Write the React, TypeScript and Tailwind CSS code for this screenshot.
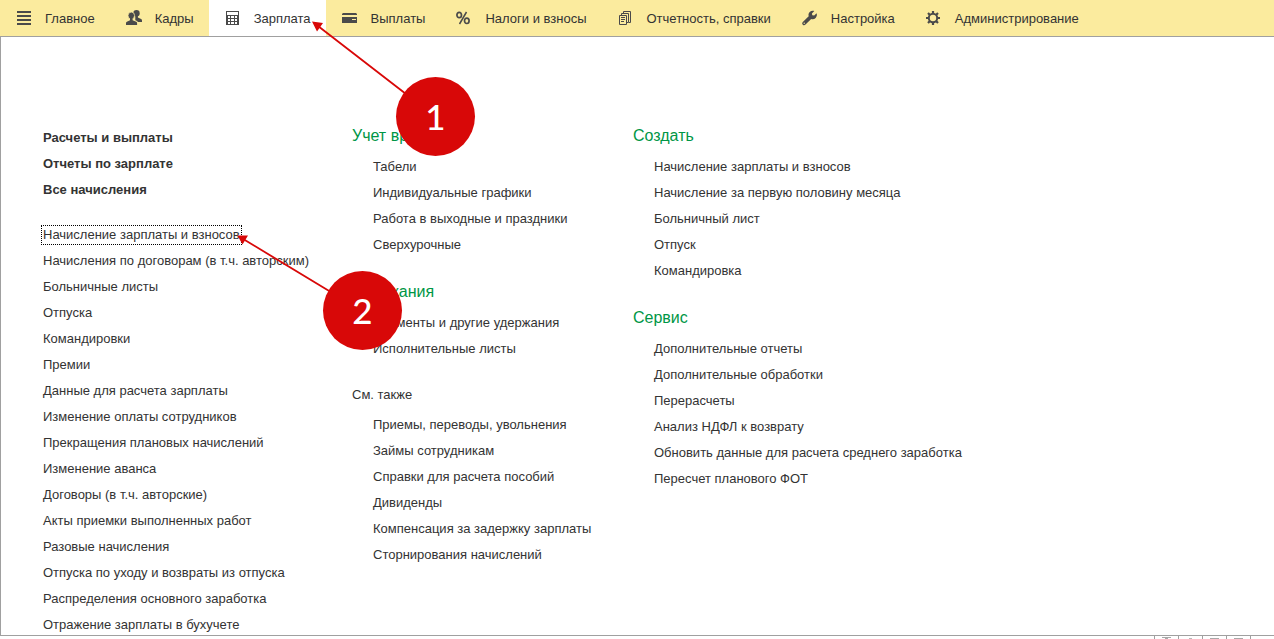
import React from 'react';

type NavItem = { label: string; icon: React.ReactNode; active?: boolean };

function Icon({ children }: { children: React.ReactNode }) {
  return (
    <svg width="16" height="16" viewBox="0 0 16 16" fill="#4a4a4a" className="shrink-0 overflow-visible" aria-hidden="true">
      {children}
    </svg>
  );
}

const navItems: NavItem[] = [
  {
    label: 'Главное',
    icon: (
      <Icon>
        <path d="M1 1h14v2H1zM1 5h14v2H1zM1 9h14v2H1zM1 13h14v2H1z" />
      </Icon>
    ),
  },
  {
    label: 'Кадры',
    icon: (
      <Icon>
        <circle cx="10.500" cy="3.200" r="3.200" />
        <path d="M9.300 5h2.600v2.600l3.200 1.500c.5.300.9.800.9 1.500V12h-4.200c-.4-.9-1.300-1.300-2.500-1.700Z" />
        <ellipse cx="5.300" cy="5.600" rx="3.300" ry="3.500" stroke="#fbeb9e" strokeWidth=".8" />
        <path d="M4 8h2.600v2.200l3.600 1.500c.6.300.9.800.9 1.500V15H0v-1.800c0-.7.300-1.200.9-1.500L4 10.200Z" />
      </Icon>
    ),
  },
  {
    label: 'Зарплата',
    active: true,
    icon: (
      <Icon>
        <path fillRule="evenodd" d="M1 1h13v14H1zM2 2v3h11V2zM3 6v2h2V6zM6 6v2h3V6zM10 6v2h2V6zM3 9v2h2V9zM6 9v2h3V9zM10 9v2h2V9zM3 12v2h2v-2zM6 12v2h3v-2zM10 12v2h2v-2z" />
      </Icon>
    ),
  },
  {
    label: 'Выплаты',
    icon: (
      <Icon>
        <path d="M1 3h13l1 1v1H0V4z" />
        <path fillRule="evenodd" d="M0 7h15v6H0zM10 9v1h4V9z" />
      </Icon>
    ),
  },
  {
    label: 'Налоги и взносы',
    icon: (
      <Icon>
        <g fill="none" stroke="#4a4a4a">
          <ellipse cx="3.200" cy="5" rx="2.300" ry="2.700" strokeWidth="1.700" />
          <ellipse cx="10.800" cy="10.800" rx="2.300" ry="2.700" strokeWidth="1.700" />
          <path d="M10.500 2 3.500 14" strokeWidth="1.500" />
        </g>
      </Icon>
    ),
  },
  {
    label: 'Отчетность, справки',
    icon: (
      <Icon>
        <g fill="none" stroke="#4a4a4a">
          <path d="M1.500 5.500h7v9h-7zM3.500 5V3.500h7v9H9M5.500 3V1.500h7v11H11" />
          <path d="M3 7.500h4M3 9.500h4M3 11.500h3" />
        </g>
      </Icon>
    ),
  },
  {
    label: 'Настройка',
    icon: (
      <Icon>
        <path d="M14.600 3.300 12.200 5.600 10.300 5.200 9.900 3.500 12.300 1.100C10.700.5 8.900.9 7.700 2.100 6.500 3.300 6.200 4.900 6.700 6.300L.8 12C0 12.800 0 14 .8 14.700c.7.7 1.900.7 2.700-.1l5.700-5.700c1.500.5 3.200.2 4.400-1 1.300-1.200 1.600-3.100 1-4.600Z" />
        <circle cx="2.200" cy="13.200" r=".7" fill="#fbeb9e" />
      </Icon>
    ),
  },
  {
    label: 'Администрирование',
    icon: (
      <Icon>
        <circle cx="7" cy="8" r="4.200" fill="none" stroke="#4a4a4a" strokeWidth="2" />
        <path d="M7 1v3M7 12v3M0 8h3M11 8h3M2 3l2.200 2.200M9.800 10.800 12 13M12 3 9.800 5.200M4.200 10.800 2 13" stroke="#4a4a4a" strokeWidth="2.200" />
      </Icon>
    ),
  },
];

const mainLinks = ['Расчеты и выплаты', 'Отчеты по зарплате', 'Все начисления'];

const payrollLinks = [
  'Начисление зарплаты и взносов',
  'Начисления по договорам (в т.ч. авторским)',
  'Больничные листы',
  'Отпуска',
  'Командировки',
  'Премии',
  'Данные для расчета зарплаты',
  'Изменение оплаты сотрудников',
  'Прекращения плановых начислений',
  'Изменение аванса',
  'Договоры (в т.ч. авторские)',
  'Акты приемки выполненных работ',
  'Разовые начисления',
  'Отпуска по уходу и возвраты из отпуска',
  'Распределения основного заработка',
  'Отражение зарплаты в бухучете',
];

type Group = { title: string; small?: boolean; links: string[] };

const middleGroups: Group[] = [
  { title: 'Учет времени', links: ['Табели', 'Индивидуальные графики', 'Работа в выходные и праздники', 'Сверхурочные'] },
  { title: 'Удержания', links: ['Алименты и другие удержания', 'Исполнительные листы'] },
  {
    title: 'См. также',
    small: true,
    links: [
      'Приемы, переводы, увольнения',
      'Займы сотрудникам',
      'Справки для расчета пособий',
      'Дивиденды',
      'Компенсация за задержку зарплаты',
      'Сторнирования начислений',
    ],
  },
];

const rightGroups: Group[] = [
  {
    title: 'Создать',
    links: ['Начисление зарплаты и взносов', 'Начисление за первую половину месяца', 'Больничный лист', 'Отпуск', 'Командировка'],
  },
  {
    title: 'Сервис',
    links: [
      'Дополнительные отчеты',
      'Дополнительные обработки',
      'Перерасчеты',
      'Анализ НДФЛ к возврату',
      'Обновить данные для расчета среднего заработка',
      'Пересчет планового ФОТ',
    ],
  },
];

function LinkList({ links, focused }: { links: string[]; focused?: string }) {
  return (
    <ul className="flex flex-col items-start gap-1.5">
      {links.map((label) => (
        <li key={label} className="flex">
          <a
            href="#"
            className={
              label === focused
                ? 'h-5 whitespace-nowrap leading-5 outline-1 -outline-offset-1 outline-dotted outline-black -mx-0.5 px-0.5'
                : 'h-5 whitespace-nowrap leading-5'
            }
          >
            {label}
          </a>
        </li>
      ))}
    </ul>
  );
}

function Groups({ groups }: { groups: Group[] }) {
  return (
    <div className="flex flex-col gap-[27px]">
      {groups.map((g) => (
        <section key={g.title} className="flex flex-col gap-[11px]">
          <h2 className={g.small ? 'leading-[18px]' : 'text-base leading-5 text-[#009646]'}>{g.title}</h2>
          <div className="pl-[21px]">
            <LinkList links={g.links} />
          </div>
        </section>
      ))}
    </div>
  );
}

function Marker({ n, className }: { n: number; className: string }) {
  return (
    <div
      className={`absolute flex size-[79px] items-center justify-center rounded-full bg-[#d80808] font-['Lato',sans-serif] text-[35px] leading-none font-medium text-white ${className}`}
    >
      {n}
    </div>
  );
}

export default function App() {
  return (
    <div className="relative overflow-hidden bg-white font-['Liberation_Sans',Arial,sans-serif] text-[13px] text-[#333]">
      <nav className="flex h-[37px] border-b border-[#a0a0a0] bg-[#fbeb9e]">
        {navItems.map((item) => (
          <a
            key={item.label}
            href="#"
            className={
              item.active
                ? 'flex items-center gap-[13px] whitespace-nowrap bg-white pr-[15px] pl-4'
                : 'flex items-center gap-[13px] whitespace-nowrap pr-[15px] pl-4'
            }
          >
            {item.icon}
            <span className="pt-0.5">{item.label}</span>
          </a>
        ))}
      </nav>

      <main className="flex items-start border-b border-l border-[#a0a0a0] pt-[89px] pl-[42px]">
        <div className="w-[309px] shrink-0 pt-0.5">
          <div className="font-bold">
            <LinkList links={mainLinks} />
          </div>
          <div className="mt-[25px]">
            <LinkList links={payrollLinks} focused="Начисление зарплаты и взносов" />
          </div>
        </div>
        <div className="w-[281px] shrink-0">
          <Groups groups={middleGroups} />
        </div>
        <div className="flex-1">
          <Groups groups={rightGroups} />
        </div>
      </main>

      <div className="flex h-[3px] justify-end overflow-hidden pr-[23px]">
        <div className="flex w-6 justify-center border-l border-[#a0a0a0]">
          <svg width="9" height="3" aria-hidden="true"><path d="M0 1h9v1H0zM3 2h3v1H3z" fill="#a8a8a8" /></svg>
        </div>
        <div className="flex w-6 justify-center border-l border-[#a0a0a0]">
          <svg width="9" height="3" aria-hidden="true"><path d="M3 2h3v1H3z" fill="#b8b8b8" /></svg>
        </div>
        <div className="flex w-6 justify-center border-l border-[#a0a0a0]">
          <svg width="9" height="3" aria-hidden="true"><path d="M0 2h9v1H0z" fill="#a8a8a8" /></svg>
        </div>
        <div className="flex w-[25px] justify-center border-x border-[#a0a0a0]">
          <svg width="9" height="3" aria-hidden="true"><path d="M0 2h9v1H0z" fill="#a8a8a8" /></svg>
        </div>
      </div>

      <svg className="pointer-events-none absolute top-0 left-0" width="480" height="360" aria-hidden="true">
        <g stroke="#d80808" strokeWidth="1.800">
          <path d="M318 26 406 94M244 239.500 330 291.500" />
        </g>
        <path d="M312 21.500 323 23 317 31.500ZM237.500 235.500 248 235.500 242.500 244.500Z" fill="#d80808" />
      </svg>
      <Marker n={1} className="top-[77px] left-[396px]" />
      <Marker n={2} className="top-[271px] left-[323px]" />
    </div>
  );
}
